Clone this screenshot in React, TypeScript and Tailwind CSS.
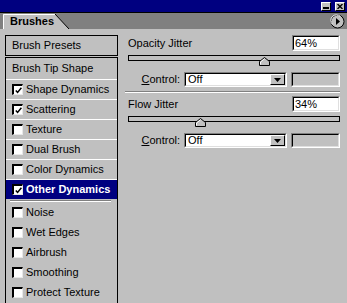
import React from "react";

const sunkenOuter =
  "border-t border-l border-b border-r border-t-[#808080] border-l-[#808080] border-b-white border-r-white";
const sunkenInner =
  "border-t border-l border-b border-r border-t-black border-l-black border-b-[#dfdfdf] border-r-[#dfdfdf]";
const raised =
  "border-t border-l border-b border-r border-t-white border-l-white border-b-black border-r-black";

function CheckBox({ on }: { on?: boolean }) {
  return (
    <span className="flex h-[11px] w-[11px] shrink-0 items-center justify-center border-t-2 border-l-2 border-b border-r border-t-black border-l-black border-b-[#e8e8e8] border-r-[#e8e8e8] bg-white">
      {on && (
        <svg width="7" height="7" viewBox="0 0 7 7">
          <polyline points="0.8,3.4 2.6,5.4 6.4,0.8" fill="none" stroke="black" strokeWidth="1.5" />
        </svg>
      )}
    </span>
  );
}

type Item = { label: string; check?: boolean; on?: boolean; selected?: boolean };

const tipItems: Item[] = [
  { label: "Brush Tip Shape" },
  { label: "Shape Dynamics", check: true, on: true },
  { label: "Scattering", check: true, on: true },
  { label: "Texture", check: true },
  { label: "Dual Brush", check: true },
  { label: "Color Dynamics", check: true },
];

const extraItems = ["Noise", "Wet Edges", "Airbrush", "Smoothing", "Protect Texture"];

function ListRow({ item, first }: { item: Item; first?: boolean }) {
  return (
    <div
      className={`flex items-center gap-[3px] border-b border-white pl-[6px] ${first ? "h-[22px]" : "h-[20px]"}`}
    >
      {item.check && <CheckBox on={item.on} />}
      <span>{item.label}</span>
    </div>
  );
}

function Slider({ value }: { value: number }) {
  const w = 212;
  return (
    <div className="relative ml-[3px] mt-[4px] h-[6px] w-[212px] border border-black bg-[#c0c0c0]">
      <div className="absolute top-[1px]" style={{ left: Math.round((value / 100) * w) - 6 }}>
        <svg width="11" height="9" viewBox="0 0 11 9">
          <polygon points="0.5,8.5 0.5,4.5 5.5,0.5 10.5,4.5 10.5,8.5" fill="#c0c0c0" stroke="black" />
          <polyline points="1.5,7.5 1.5,5 5.5,1.8" fill="none" stroke="white" />
        </svg>
      </div>
    </div>
  );
}

function JitterSection({ label, value }: { label: string; value: number }) {
  return (
    <div className="flex flex-col">
      <div className="flex h-[16px] items-center justify-between pl-[3px]">
        <span>{label}</span>
        <div className={`h-[16px] w-[48px] ${sunkenOuter}`}>
          <div className={`flex h-full items-center bg-white pl-[1px] ${sunkenInner}`}>{value}%</div>
        </div>
      </div>
      <Slider value={value} />
      <div className="mt-[11px] flex h-[15px] items-center justify-end">
        <span className="mr-[4px]">
          <span className="underline underline-offset-1">C</span>ontrol:
        </span>
        <div className={`h-[15px] w-[103px] ${sunkenOuter}`}>
          <div className={`flex h-full items-center justify-between bg-white pl-[2px] ${sunkenInner}`}>
            <span>Off</span>
            <div className={`flex h-[11px] w-[15px] items-center justify-center bg-[#c0c0c0] ${raised}`}>
              <svg width="7" height="4" viewBox="0 0 7 4">
                <polygon points="0,0 7,0 3.5,4" fill="black" />
              </svg>
            </div>
          </div>
        </div>
        <div className={`ml-[4px] h-[15px] w-[49px] ${sunkenOuter}`}>
          <div className={`h-full bg-[#c0c0c0] ${sunkenInner}`} />
        </div>
      </div>
    </div>
  );
}

export default function App() {
  return (
    <div className="h-[303px] w-[347px] overflow-hidden bg-[#c0c0c0] text-[11px] leading-none text-black [font-family:'Liberation_Sans',Arial,sans-serif]">
      {/* title bar */}
      <div className="flex h-[12px] items-start justify-end gap-[4px] bg-[#000080] pr-[2px] pt-[2px]">
        <div className={`flex h-[9px] w-[10px] items-end justify-center bg-[#c0c0c0] pb-[1px] ${raised}`}>
          <div className="h-[2px] w-[6px] bg-black" />
        </div>
        <div className={`flex h-[9px] w-[10px] items-center justify-center bg-[#c0c0c0] ${raised}`}>
          <svg width="6" height="5" viewBox="0 0 6 5">
            <path d="M0.5 0 L5.5 5 M5.5 0 L0.5 5" stroke="black" strokeWidth="1.4" />
          </svg>
        </div>
      </div>

      {/* tab strip */}
      <div className="flex h-[17px] items-stretch justify-between border-t border-black bg-[#808080] pl-[3px] pr-[2px]">
        <div className="relative mt-[1px] w-[66px]">
          <svg className="absolute inset-0" width="66" height="15" viewBox="0 0 66 15">
            <polygon points="0,0 52,0 66,15 0,15" fill="#c0c0c0" />
            <polyline points="0.5,15 0.5,0.5 52,0.5" fill="none" stroke="white" />
            <line x1="52" y1="0" x2="66" y2="15" stroke="black" />
          </svg>
          <span className="relative flex h-full items-center pl-[7px] font-bold">Brushes</span>
        </div>
        <div className="flex items-center">
          <svg width="15" height="15" viewBox="0 0 15 15">
            <circle cx="7.5" cy="7.5" r="6.5" fill="#c0c0c0" stroke="black" />
            <path d="M2.5 10.5 A5 5 0 0 1 10.5 2.5" fill="none" stroke="white" />
            <polygon points="6,4 10,7.5 6,11" fill="black" />
          </svg>
        </div>
      </div>

      {/* body */}
      <div className="flex">
        <div className="ml-[5px] mt-[6px] flex w-[113px] flex-col">
          <div className="flex h-[21px] items-center border border-black pl-[6px]">Brush Presets</div>
          <div className="mt-[1px] h-[260px] border-x border-t border-black">
            {tipItems.map((item, i) => (
              <ListRow key={item.label} item={item} first={i === 0} />
            ))}
            <div className="flex h-[19px] items-center gap-[3px] bg-[#000080] pl-[6px] font-bold text-white">
              <CheckBox on />
              <span>Other Dynamics</span>
            </div>
            <div className="ml-[4px] mr-[6px] mt-[1px] h-[2px] border-t border-b border-t-[#808080] border-b-white" />
            {extraItems.map((label) => (
              <div key={label} className="flex h-[20px] items-center gap-[3px] pl-[6px]">
                <CheckBox />
                <span>{label}</span>
              </div>
            ))}
          </div>
        </div>

        <div className="ml-[7px] mt-[6px] flex w-[215px] flex-col">
          <JitterSection label="Opacity Jitter" value={64} />
          <div className="mt-[4px] h-[2px] border-t border-b border-t-[#808080] border-b-white" />
          <div className="mt-[3px]">
            <JitterSection label="Flow Jitter" value={34} />
          </div>
        </div>
      </div>
    </div>
  );
}
